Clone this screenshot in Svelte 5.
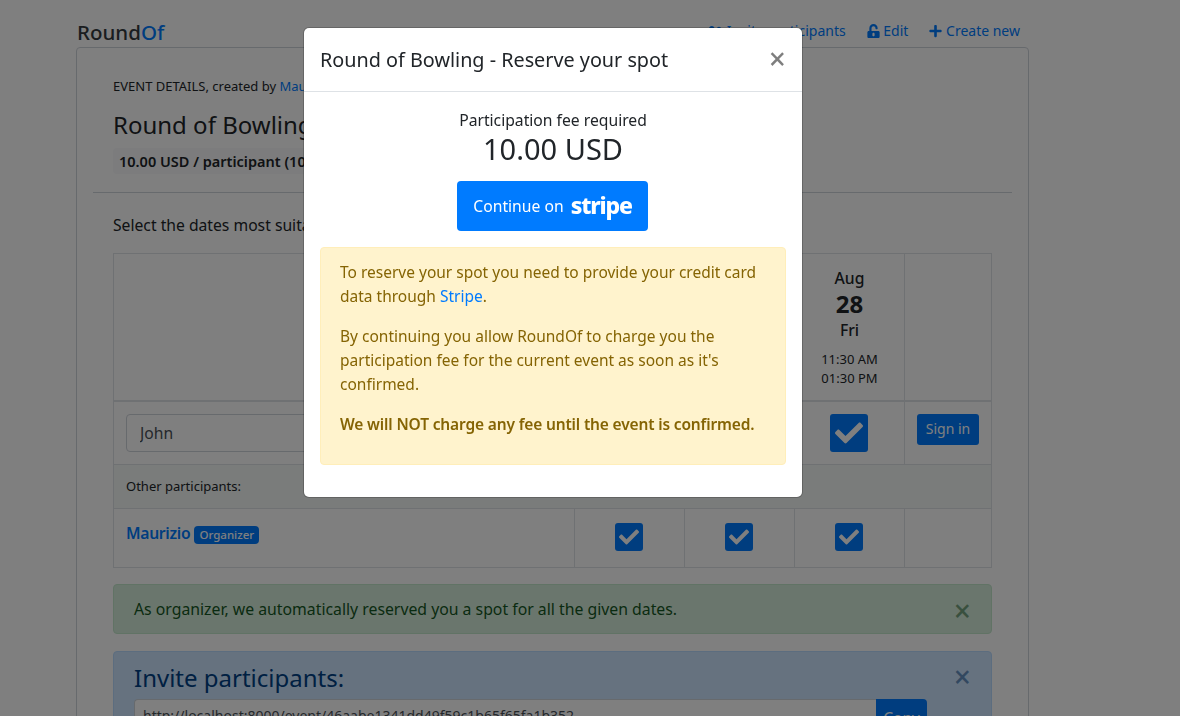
<script>
	const dates = [
		{ month: 'Aug', day: 26, name: 'Wed', from: '11:30 AM', to: '01:30 PM' },
		{ month: 'Aug', day: 27, name: 'Thu', from: '11:30 AM', to: '01:30 PM' },
		{ month: 'Aug', day: 28, name: 'Fri', from: '11:30 AM', to: '01:30 PM' }
	];
	const check = 'M173.9 439.4 7.5 273c-10-10-10-26.2 0-36.2l36.2-36.2c10-10 26.2-10 36.2 0L192 312.7 432.1 72.6c10-10 26.2-10 36.2 0l36.2 36.2c10 10 10 26.2 0 36.2L210.1 439.4c-10 10-26.2 10-36.2 0z';
</script>

<div class="page">
	<header class="topbar">
		<div class="logo">Round<span>Of</span></div>
		<nav class="links">
			<a href="#invite">
				<svg width="16" height="13" viewBox="0 0 640 512"><path d="M192 256c61.900 0 112-50.100 112-112S253.900 32 192 32 80 82.100 80 144s50.100 112 112 112zm76.800 32h-8.300c-20.800 10-43.900 16-68.500 16s-47.600-6-68.500-16h-8.300C51.600 288 0 339.600 0 403.200V432c0 26.500 21.500 48 48 48h288c26.500 0 48-21.500 48-48v-28.800c0-63.600-51.600-115.200-115.200-115.200zM480 256c53 0 96-43 96-96s-43-96-96-96-96 43-96 96 43 96 96 96zm48 32h-3.800c-13.900 4.800-28.600 8-44.200 8s-30.300-3.200-44.200-8H432c-20.400 0-39.200 5.900-55.700 15.400 24.400 26.300 39.700 61.200 39.700 99.800v38.400c0 2.200-.5 4.300-.6 6.400H592c26.500 0 48-21.500 48-48 0-61.900-50.100-112-112-112z" /></svg>
				Invite participants
			</a>
			<a href="#edit">
				<svg width="13" height="14" viewBox="0 0 448 512"><path d="M400 256H152V152.900c0-39.600 31.700-72.500 71.300-72.900 40-.4 72.700 32.100 72.700 72v16c0 13.300 10.700 24 24 24h32c13.300 0 24-10.700 24-24v-16C376 68 307.500-.3 223.500 0 139.500.3 72 69.500 72 153.500V256H48c-26.500 0-48 21.500-48 48v160c0 26.500 21.500 48 48 48h352c26.500 0 48-21.500 48-48V304c0-26.500-21.500-48-48-48zM264 408c0 22.100-17.900 40-40 40s-40-17.900-40-40v-48c0-22.100 17.900-40 40-40s40 17.900 40 40v48z" /></svg>
				Edit
			</a>
			<a href="#new">
				<svg width="13" height="14" viewBox="0 0 448 512"><path d="M416 208H272V64c0-17.700-14.300-32-32-32h-32c-17.700 0-32 14.300-32 32v144H32c-17.700 0-32 14.300-32 32v32c0 17.700 14.300 32 32 32h144v144c0 17.700 14.300 32 32 32h32c17.700 0 32-14.300 32-32V304h144c17.700 0 32-14.300 32-32v-32c0-17.700-14.300-32-32-32z" /></svg>
				Create new
			</a>
		</nav>
	</header>

	<main class="card">
		<section class="details">
			<div class="created">EVENT DETAILS, created by <a href="#user">Maurizio</a></div>
			<h4>Round of Bowling</h4>
			<span class="fee-badge">10.00 USD / participant (10 participants max)</span>
		</section>
		<hr />
		<section class="body">
			<p class="select">Select the dates most suitable for you</p>
			<table>
				<colgroup>
					<col class="c-name" />
					<col class="c-date" />
					<col class="c-date" />
					<col class="c-date" />
					<col />
				</colgroup>
				<thead>
					<tr>
						<th></th>
						{#each dates as d}
							<th class="date">
								<div>{d.month}</div>
								<div class="day">{d.day}</div>
								<div>{d.name}</div>
								<div class="times">{d.from}<br />{d.to}</div>
							</th>
						{/each}
						<th></th>
					</tr>
				</thead>
				<tbody>
					<tr class="me">
						<td><input value="John" /></td>
						{#each dates as d}
							<td class="mid">
								<span class="box big">
									<svg viewBox="0 0 512 512"><path d={check} /></svg>
								</span>
							</td>
						{/each}
						<td class="mid"><button class="signin">Sign in</button></td>
					</tr>
					<tr class="others">
						<td colspan="5">Other participants:</td>
					</tr>
					<tr class="person">
						<td><a href="#m">Maurizio</a> <span class="tag">Organizer</span></td>
						{#each dates as d}
							<td class="mid">
								<span class="box">
									<svg viewBox="0 0 512 512"><path d={check} /></svg>
								</span>
							</td>
						{/each}
						<td></td>
					</tr>
				</tbody>
			</table>

			<div class="alert green">
				As organizer, we automatically reserved you a spot for all the given dates.
				<span class="x">×</span>
			</div>

			<div class="alert blue">
				<h4>Invite participants:</h4>
				<span class="x">×</span>
				<div class="copy-row">
					<input value="http://localhost:8000/event/46aabe1341dd49f59c1b65f65fa1b352" />
					<button>Copy</button>
				</div>
			</div>
		</section>
	</main>
</div>

<div class="backdrop"></div>

<div class="modal-wrap">
	<div class="modal">
		<div class="modal-head">
			<h5>Round of Bowling - Reserve your spot</h5>
			<span class="close">×</span>
		</div>
		<div class="modal-body">
			<div class="center">
				<div>Participation fee required</div>
				<h3>10.00 USD</h3>
				<button class="stripe-btn">Continue on <span class="stripe">stripe</span></button>
			</div>
			<div class="warn">
				<p>To reserve your spot you need to provide your credit card data through <a href="#stripe">Stripe</a>.</p>
				<p>By continuing you allow RoundOf to charge you the participation fee for the current event as soon as it's confirmed.</p>
				<p><strong>We will NOT charge any fee until the event is confirmed.</strong></p>
			</div>
		</div>
	</div>
</div>

<style>
	:global(body) {
		margin: 0;
		height: 716px;
		overflow: hidden;
		background: #fff;
		color: #212529;
		font-family: 'Noto Sans', sans-serif;
		font-size: 15.7px;
		line-height: 24px;
	}

	a {
		color: #007bff;
		text-decoration: none;
	}

	.page {
		width: 953px;
		margin-left: 76px;
	}

	.topbar {
		height: 47px;
		display: flex;
		justify-content: space-between;
		align-items: flex-end;
	}

	.logo {
		font-size: 20.500px;
		font-weight: 500;
		line-height: 30px;
		margin-left: 1px;
		color: #343a40;
	}

	.logo span {
		color: #007bff;
	}

	.links {
		display: flex;
		gap: 21px;
		font-size: 14px;
		line-height: 20px;
		padding: 0 9px 6px 0;
	}

	.links svg {
		fill: #007bff;
		vertical-align: -2px;
	}

	.card {
		border: 1px solid #ced4da;
		border-radius: 4px;
		padding: 28px 16px 0;
		height: 800px;
		box-sizing: border-box;
	}

	.details {
		padding: 0 20px;
	}

	.created {
		font-size: 13px;
		line-height: 20px;
	}

	h4 {
		font-size: 24px;
		line-height: 29px;
		font-weight: 400;
		margin: 14px 0 9px;
	}

	.fee-badge {
		display: inline-block;
		background: #f8f9fa;
		border-radius: 4px;
		padding: 0 6px;
		font-size: 14.5px;
		font-weight: 600;
		line-height: 26px;
	}

	hr {
		border: 0;
		border-top: 1px solid #ced4da;
		margin: 18px 0 20px;
	}

	.body {
		padding: 0 20px;
	}

	.select {
		margin: 0 0 16px;
	}

	table {
		width: 879px;
		table-layout: fixed;
		border-collapse: collapse;
	}

	.c-name {
		width: 461px;
	}

	.c-date {
		width: 110px;
	}

	th,
	td {
		border: 1px solid #dee2e6;
		padding: 12px;
	}

	thead th {
		height: 147px;
		box-sizing: border-box;
		border-bottom-width: 2px;
		font-weight: 500;
		padding: 12px;
		vertical-align: top;
	}

	.date {
		line-height: 25px;
	}

	.day {
		font-size: 24px;
		font-weight: 700;
		line-height: 27px;
		margin: -1px 0 1px;
	}

	.times {
		font-size: 13px;
		font-weight: 400;
		line-height: 19px;
		margin-top: 7px;
	}

	.mid {
		text-align: center;
		vertical-align: middle;
		padding: 0;
	}

	.me td {
		height: 62px;
		box-sizing: border-box;
	}

	.me input {
		width: 100%;
		height: 38px;
		box-sizing: border-box;
		border: 1px solid #ced4da;
		border-radius: 4px;
		padding: 6px 13px;
		font: inherit;
		color: #495057;
		display: block;
	}

	.box {
		display: inline-flex;
		align-items: center;
		justify-content: center;
		width: 28px;
		height: 28px;
		margin-right: 1px;
		background: #007bff;
		border-radius: 3px;
		vertical-align: middle;
	}

	.box svg {
		width: 20px;
		height: 20px;
		fill: #fff;
	}

	.person .box {
		margin-bottom: 2px;
	}

	.box.big {
		width: 38px;
		height: 38px;
	}

	.box.big svg {
		width: 28px;
		height: 28px;
	}

	.signin {
		background: #007bff;
		color: #fff;
		border: 0;
		border-radius: 3px;
		font: inherit;
		font-size: 14px;
		width: 62px;
		height: 31px;
		padding: 0;
		margin-bottom: 8px;
	}

	.others td {
		height: 44px;
		box-sizing: border-box;
		padding: 0 12px 2px;
		font-size: 13px;
		background: #f4f8f6;
	}

	.person td {
		height: 59px;
		box-sizing: border-box;
		padding: 0 12px 10px;
	}

	.person td.mid {
		padding: 0;
	}

	.person a {
		font-weight: 600;
		letter-spacing: -0.3px;
	}

	.tag {
		display: inline-block;
		background: #007bff;
		color: #fff;
		border-radius: 4px;
		font-size: 11.5px;
		line-height: 18px;
		padding: 0 5px;
		font-weight: 500;
	}

	.alert {
		position: relative;
		border: 1px solid;
		border-radius: 4px;
		padding: 12px 20px;
		margin-top: 16px;
	}

	.green {
		background: #d4edda;
		border-color: #c3e6cb;
		color: #155724;
		font-size: 15.8px;
	}

	.blue {
		background: #cce5ff;
		border-color: #b8daff;
		color: #004085;
		height: 120px;
		box-sizing: border-box;
		margin-top: 17px;
		padding-top: 11px;
	}

	.blue h4 {
		margin: 0 0 7px;
	}

	.x {
		position: absolute;
		top: 0;
		right: 20px;
		font-size: 30px;
		line-height: 52px;
		font-weight: 500;
		opacity: 0.5;
	}

	.blue .x {
		top: -1px;
	}

	.copy-row {
		display: flex;
		width: 793px;
	}

	.copy-row input {
		flex: 1;
		min-width: 0;
		height: 38px;
		box-sizing: border-box;
		border: 1px solid #ced4da;
		border-right: 0;
		border-radius: 4px 0 0 4px;
		padding: 3px 8px 9px;
		font: inherit;
		font-size: 14px;
		color: #495057;
	}

	.copy-row button {
		width: 51px;
		height: 38px;
		background: #007bff;
		color: #fff;
		border: 0;
		border-radius: 0 4px 4px 0;
		font: inherit;
		padding: 0;
	}

	.backdrop {
		position: fixed;
		inset: 0;
		background: rgba(0, 0, 0, 0.5);
	}

	.modal-wrap {
		position: fixed;
		top: 28px;
		left: 304px;
	}

	.modal {
		width: 498px;
		box-sizing: border-box;
		background: #fff;
		border-radius: 5px;
		box-shadow: 0 0 0 1px rgba(0, 0, 0, 0.2);
	}

	.modal-head {
		display: flex;
		justify-content: space-between;
		align-items: center;
		height: 64px;
		box-sizing: border-box;
		padding: 0 16px;
		border-bottom: 1px solid #dee2e6;
	}

	h5 {
		margin: 0;
		font-size: 19.8px;
		line-height: 30px;
		font-weight: 400;
	}

	.close {
		font-size: 30px;
		font-weight: 500;
		line-height: 30px;
		color: #000;
		opacity: 0.5;
		margin-top: -1px;
	}

	.modal-body {
		padding: 16px;
	}

	.center {
		text-align: center;
	}

	h3 {
		font-size: 29px;
		line-height: 33px;
		font-weight: 400;
		margin: 0 0 16px;
	}

	.stripe-btn {
		display: inline-flex;
		align-items: center;
		justify-content: center;
		gap: 7px;
		width: 191px;
		height: 50px;
		margin-right: 1px;
		background: #007bff;
		color: #fff;
		border: 0;
		border-radius: 4px;
		font: inherit;
		padding: 0;
	}

	.stripe {
		font-size: 23px;
		font-weight: 800;
		letter-spacing: -1.2px;
		margin-top: -3px;
	}

	.warn {
		background: #fff3cd;
		border: 1px solid #ffeeba;
		border-radius: 4px;
		color: #856404;
		font-size: 15.5px;
		padding: 12px 19px;
		margin: 16px 0;
	}

	.warn p {
		margin: 0 0 16px;
	}

	.warn strong {
		font-weight: 600;
		letter-spacing: -0.15px;
	}
</style>
